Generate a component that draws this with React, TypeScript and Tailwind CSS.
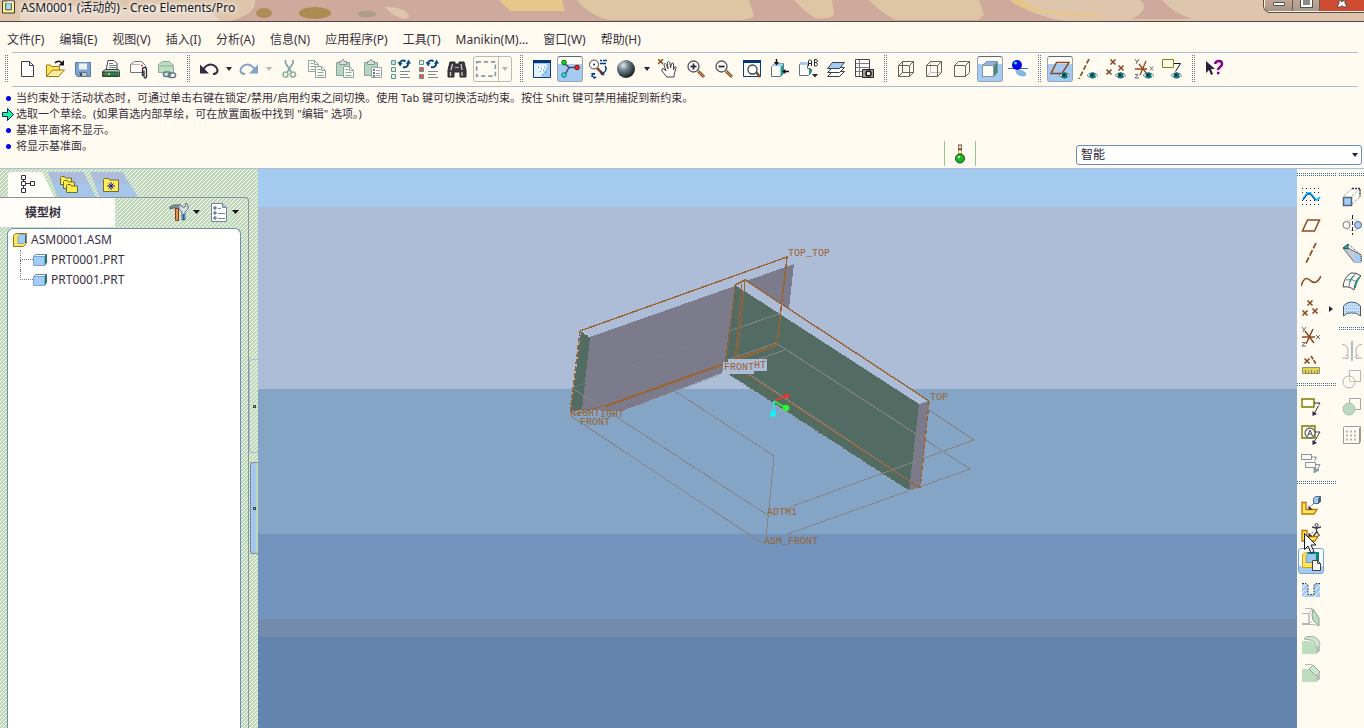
import React from "react";

type IconProps = { children: React.ReactNode; size?: number };

function Icon({ children, size = 20 }: IconProps) {
  return (
    <svg
      width={size}
      height={size}
      viewBox="0 0 20 20"
      fill="none"
      stroke="#39404a"
      strokeWidth="1"
      aria-hidden="true"
      className="block shrink-0"
    >
      {children}
    </svg>
  );
}

const BROWN = "#8c4a21";
const GOLD = "#ffe75a";

function Eye() {
  return (
    <g>
      <path d="M9 16.500Q14.500 11 20 16.500Q14.500 21 9 16.500Z" fill="#fffbf0" stroke="#39525a" strokeDasharray="2 1" />
      <circle cx="14.500" cy="16.500" r="3" fill="#007b84" stroke="none" />
      <circle cx="14" cy="16" r="1.200" fill="#101820" stroke="none" />
    </g>
  );
}

function Crosses({ points }: { points: [number, number][] }) {
  return (
    <g stroke={BROWN} strokeWidth="1.600">
      {points.map(([x, y]) => (
        <path key={`${x}-${y}`} d={`M${x - 2.5} ${y - 2.5}l5 5M${x + 2.5} ${y - 2.5}l-5 5`} />
      ))}
    </g>
  );
}

function Sheet({ x, y, tone = "#8ca5a5" }: { x: number; y: number; tone?: string }) {
  return (
    <g stroke={tone}>
      <path d={`M${x} ${y}h6l4 4v7h-10z`} fill="#fffbf0" />
      <path d={`M${x + 6} ${y}v4h4M${x + 2} ${y + 3}h3M${x + 2} ${y + 6}h6M${x + 2} ${y + 9}h6`} />
    </g>
  );
}

function Clipboard() {
  return (
    <>
      <path d="M1.500 3.500h13v13h-13z" fill="#b5d6bd" stroke="#84a59c" />
      <path d="M4.500 5.500v-3h2l1-2h1l1 2h2v3z" fill="#dedede" stroke="#84949c" />
    </>
  );
}

function Lens({ sign }: { sign?: "plus" | "minus" }) {
  return (
    <>
      <path d="M12 12l6 6" stroke="#844a21" strokeWidth="3" />
      <path d="M12 12l6 6" stroke="#d6a573" strokeWidth="1" />
      <circle cx="7.500" cy="7.500" r="5.500" fill="#fffdf8" stroke="#52525a" strokeWidth="1.300" />
      {sign && <path d="M4.500 7.500h6" stroke="#29293a" strokeWidth="1.800" />}
      {sign === "plus" && <path d="M7.500 4.500v6" stroke="#29293a" strokeWidth="1.800" />}
    </>
  );
}

function Regenerate({ first, rest }: { first: string; rest: string }) {
  return (
    <>
      <path d="M.5 1.500h4v4h-4z" fill={first} stroke="#63948c" />
      <path d="M.5 8.500h4v4h-4z M.5 15.500h4v4h-4z" fill={rest} stroke="#63948c" />
      <path d="M8.500 4.500c1-3 4-4 6-2M12 8c3 1 5.500-1 5-4" stroke="#004a84" strokeWidth="2" />
      <path d="M6.500 3l5 1-2.500 3.500z M20 4.500l-5 .500 2.500-4.500z" fill="#004a84" stroke="none" />
      <path d="M9 12.500h10M9 15.500h8M9 18.500h10" stroke="#7b8c94" />
    </>
  );
}

const icons = {
  newFile: (
    <Icon>
      <path d="M4.500 2.500h8l4 4v11h-12z" fill="#fff" />
      <path d="M12.500 2.500v4h4" />
    </Icon>
  ),
  open: (
    <Icon>
      <path d="M1.500 17v-11h4l1 1.500h8v9.500z" fill={GOLD} stroke="#a57318" />
      <path d="M1.500 17.500l6-6.500h12l-6 6.500z" fill="#ffef9c" stroke="#a57318" />
      <path d="M10 4c2-2.500 5-2.500 7 0" stroke="#18181f" strokeWidth="1.500" />
      <path d="M19 1v5.500h-5.500z" fill="#18181f" stroke="none" />
    </Icon>
  ),
  save: (
    <Icon>
      <path d="M2.500 3.500h15v14h-13l-2-2z" fill="#7ba5d6" stroke="#5a7ba5" />
      <path d="M5.500 4h9v7h-9z" fill="#eff3f7" stroke="#84a5ce" />
      <path d="M6 13.500h8v4h-8z" fill="#c6c6c6" stroke="#637b94" />
      <path d="M8 14v3" stroke="#424a63" strokeWidth="2" />
    </Icon>
  ),
  print: (
    <Icon>
      <path d="M7 1.500h6l3 3v7H5z" fill="#fff" />
      <path d="M8 4.500h4M8 6.500h7M8 8.500h7" stroke="#737b84" />
      <path d="M1.500 12.500l3-2h13l1 2v5h-17z" fill="#b5c6bd" stroke="#31423a" />
      <path d="M2 13h15v4h-15z" fill="#397b52" stroke="#21523a" />
      <path d="M4 15h2" stroke="#f33" strokeWidth="2" />
      <path d="M7 15h2" stroke="#5cff4a" strokeWidth="2" />
    </Icon>
  ),
  mail: (
    <Icon>
      <path d="M1.500 5.500l4-3h7l4 4v7h-15z" fill="#fffdf7" stroke="#737373" />
      <path d="M2 5.500h9" stroke="#b5b5b5" />
      <circle cx="13" cy="6.500" r="1" fill="#ef2929" stroke="none" />
      <path d="M13.500 17v-7c0-2 4-2 4 0v7.500c0 2-2.500 2-2.500 0v-6" fill="#fffdf7" stroke="#29293a" strokeWidth="1.300" />
    </Icon>
  ),
  link: (
    <Icon>
      <path d="M1.500 5.500l4-3h7l4 4v7h-15z" fill="#bddebd" stroke="#84ad9c" />
      <path d="M3 7h13" stroke="#84ad9c" />
      <rect x="6.500" y="13" width="7" height="4.500" rx="2" fill="#cee7ce" stroke="#637b8c" strokeWidth="1.500" />
      <rect x="11.500" y="14" width="7" height="4.500" rx="2" stroke="#637b8c" strokeWidth="1.500" />
    </Icon>
  ),
  undo: (
    <Icon>
      <path d="M4 11c3-6 9-7 13-3c3 4 1 7-3 7" stroke="#392942" strokeWidth="2" />
      <path d="M1 5.500v9h9z" fill="#392942" stroke="none" />
    </Icon>
  ),
  redo: (
    <Icon>
      <path d="M16 11c-3-6-9-7-13-3c-3 4-1 7 3 7" stroke="#84a5bd" strokeWidth="2" />
      <path d="M19 5.500v9h-9z" fill="#84a5bd" stroke="none" />
    </Icon>
  ),
  cut: (
    <Icon>
      <path d="M6.500 1v3l6 9.500M14 1v3l-6 9.500" stroke="#84a5ad" strokeWidth="1.700" />
      <circle cx="6.500" cy="15.500" r="2.500" stroke="#8cb59c" strokeWidth="1.700" />
      <circle cx="14" cy="15.500" r="2.500" stroke="#8cb59c" strokeWidth="1.700" />
    </Icon>
  ),
  copy: (
    <Icon>
      <Sheet x={1.5} y={1.5} />
      <Sheet x={8.5} y={7.5} />
    </Icon>
  ),
  paste: (
    <Icon>
      <Clipboard />
      <Sheet x={8.5} y={7.5} />
    </Icon>
  ),
  pasteSpecial: (
    <Icon>
      <Clipboard />
      <path d="M8.500 8.500h10v10h-10z" fill="#fffbf0" stroke="#94a5ad" />
      <path d="M10 11h2M10 14h2M10 17h2" stroke="#637b8c" strokeWidth="2" />
      <path d="M13 11.500h4M13 14.500h4M13 16.500h4" stroke="#94a5ad" />
    </Icon>
  ),
  regen: (
    <Icon>
      <Regenerate first="#bde7d6" rest="#d6f7ef" />
    </Icon>
  ),
  regenManager: (
    <Icon>
      <Regenerate first="#e7e7e7" rest="#f7524a" />
    </Icon>
  ),
  find: (
    <Icon>
      <path d="M3 3h5v2h4V3h5l2 8v7h-6v-5H7v5H1v-7z" fill="#39393a" stroke="#29292f" />
      <path d="M5.500 5l-1.500 6M14 5l1 6M3.500 13v4M15 13v4" stroke="#cecece" strokeWidth="1.300" />
      <path d="M8 8.500h4" stroke="#b5b5b5" />
    </Icon>
  ),
  selectBox: (
    <Icon size={22}>
      <path d="M1.500 3.500h17v13h-17z" stroke="#849ca5" strokeWidth="1.500" strokeDasharray="4 2.500" />
    </Icon>
  ),
  repaint: (
    <Icon>
      <path d="M1.500 1.500h17v17h-17z" fill="#a5c6f0" stroke="#004284" />
      <path d="M2 5h13l-6 13H2z" fill="#e7efff" stroke="none" />
      <path d="M1 2.500h18" stroke="#003973" strokeWidth="3" />
      <path d="M4 8l6 9 5-10z" fill="#fff" stroke="none" />
      <path d="M6 8.500h1M9 9.500h1M12 8.500h1M8 12.500h1M11 11.500h1M13 13.500h1M10 15.500h1" stroke="#18b5ce" strokeWidth="1.500" />
    </Icon>
  ),
  spinCenter: (
    <Icon>
      <path d="M4 4l5 4.500h8M9 8.500l-4 7" stroke="#424a63" strokeWidth="1.500" />
      <circle cx="4" cy="3.500" r="2.300" fill="#18d618" stroke="#106b10" />
      <circle cx="17" cy="8.500" r="2.300" fill="#f72121" stroke="#7b1010" />
      <circle cx="4" cy="16" r="2.300" fill="#31dede" stroke="#107b7b" />
    </Icon>
  ),
  orientMode: (
    <Icon>
      <path d="M9 9l7 7" stroke="#844a21" strokeWidth="2.500" />
      <circle cx="6" cy="5.500" r="4.500" fill="#fff" stroke="#424242" />
      <circle cx="6" cy="5.500" r="1" fill="#292929" stroke="none" />
      <path d="M12 1.500h2M15 1.500h4M12 4.500h6M17 7c2 2 1 6-2 7M4 18c0-3 1-4 3-3" stroke="#003994" strokeWidth="1.500" />
      <path d="M2 14h5v2zM12 12l4 3-3 1z M4 17l5 1-3 2z" fill="#003994" stroke="none" />
    </Icon>
  ),
  sphere: (
    <Icon>
      <defs>
        <radialGradient id="ball" cx="35%" cy="30%" r="70%">
          <stop offset="0" stopColor="#dee7ef" />
          <stop offset="0.450" stopColor="#6b7b84" />
          <stop offset="1" stopColor="#182129" />
        </radialGradient>
      </defs>
      <circle cx="10" cy="10" r="9" fill="url(#ball)" stroke="none" />
    </Icon>
  ),
  pan: (
    <Icon>
      <path d="M0 0l5 5M5 0l-5 5" stroke={BROWN} strokeWidth="1.500" />
      <path d="M8 17l-4-5c-1-2 1-3 2-2l2 2-2-6c0-2 2-2 2.500 0l1.500 4-.5-6c0-2 2-2 2.500 0l.500 5 1-4c.500-1.500 2-1.500 2 0v6l1-3c1-1 2 0 1.500 1l-2 7v2H9z" fill="#fff" stroke="#4a4242" />
    </Icon>
  ),
  zoomIn: (
    <Icon>
      <Lens sign="plus" />
    </Icon>
  ),
  zoomOut: (
    <Icon>
      <Lens sign="minus" />
    </Icon>
  ),
  refit: (
    <Icon>
      <path d="M1.500 1.500h17v16h-17z" fill="#fffdf7" stroke="#004284" />
      <path d="M1 2.500h18" stroke="#003973" strokeWidth="3" />
      <path d="M14 13l4 5" stroke="#844a21" strokeWidth="2.500" />
      <circle cx="10.500" cy="10.500" r="4.500" fill="#fff" stroke="#42424a" strokeWidth="1.300" />
    </Icon>
  ),
  reorient: (
    <Icon>
      <path d="M1.500 7.500l3-3h9v10l-3 3h-9z" fill="#fffdf7" stroke="#63737b" />
      <path d="M2 7l2.500-2.500h9l-3 3z" fill="#a5cbf7" stroke="none" />
      <path d="M10.500 8l3-3v9.500l-3 3z" fill="#299c94" stroke="none" />
      <path d="M6.500 0v4M19 12.500h-4" stroke="#101018" strokeWidth="1.500" />
      <path d="M4 3h5l-2.500 3.500zM15.500 10v5l-3.500-2.500z" fill="#101018" stroke="none" />
    </Icon>
  ),
  savedViews: (
    <Icon>
      <path d="M1.500 5.500l2-2h6v6h3v5l-2 2h-9z" fill="#fffdf7" stroke="#63737b" />
      <path d="M2 5l2-2h6v3h-8z" fill="#a5cbf7" stroke="none" />
      <path d="M11 10h3v3l-3 3z" fill="#318c8c" stroke="none" />
      <path d="M10.500 7v-5l1.500-1.500 1.500 1.500v5M10.500 4.500h3M16.500 .500v6.500h2l1-1.500-1-2h-2M18.500 3.500l1-1.500-1-1.500h-2" stroke="#292931" />
      <path d="M14 15h6l-3 3.500z" fill="#292931" stroke="none" />
    </Icon>
  ),
  layers: (
    <Icon>
      <path d="M1.500 17.500l5-5h12l-5 5z" fill="#fff" />
      <path d="M1.500 13.500l5-5h12l-5 5z" fill="#fff" />
      <path d="M1.500 9.500l5-6h12l-5 6z" fill="#a5cbf7" />
    </Icon>
  ),
  viewManager: (
    <Icon>
      <path d="M1.500 .500h14v17h-14z" fill="#fff" stroke="#42424a" />
      <path d="M5.500 1v16M2 4.500h13M2 8.500h13M2 12.500h13" stroke="#7b7b84" />
      <path d="M8.500 10.500h11v8h-11z" fill="#a59c8c" stroke="#292931" />
      <circle cx="14.500" cy="14.500" r="2.500" fill="#fff" stroke="#18181f" strokeWidth="1.500" />
    </Icon>
  ),
  wireframe: (
    <Icon>
      <path d="M2.500 6.500h11v11h-11zM6.500 2.500h11v11h-11zM2.500 6.500l4-4M13.500 6.500l4-4M2.500 17.500l4-4M13.500 17.500l4-4" stroke="#6b6352" />
    </Icon>
  ),
  hiddenLine: (
    <Icon>
      <path d="M6.500 3v10.500h11M2.500 17.500l4-4" stroke="#bdbdce" />
      <path d="M2.500 6.500h11v11h-11zM2.500 6.500l4-4h11l-4 4M17.500 2.500v11l-4 4" stroke="#6b6352" />
    </Icon>
  ),
  noHidden: (
    <Icon>
      <path d="M2.500 6.500h11v11h-11zM2.500 6.500l4-4h11l-4 4M17.500 2.500v11l-4 4" stroke="#6b6352" />
    </Icon>
  ),
  shaded: (
    <Icon>
      <path d="M2.500 6.500l4-4h11l-3 4z" fill="#8cb5e7" stroke="#84949c" />
      <path d="M14 6.500l3.500-4v11l-3.500 4z" fill="#42847b" stroke="#84949c" />
      <path d="M2.500 6.500h11v11h-11z" fill="#fffdf7" stroke="#84949c" />
    </Icon>
  ),
  realism: (
    <Icon>
      <path d="M0 1h20v18H0z" fill="#fff" stroke="none" />
      <path d="M0 9.500h20" stroke="#5a6b84" />
      <ellipse cx="13" cy="14" rx="5.500" ry="3" fill="#84b5e7" stroke="none" transform="rotate(20 13 14)" />
      <circle cx="9" cy="6" r="5" fill="#0008e7" stroke="none" />
      <circle cx="7.500" cy="4" r="1.500" fill="#31e7f7" stroke="none" />
    </Icon>
  ),
  planeDisplay: (
    <Icon>
      <path d="M1 14.500h11l7-11H6.500z" stroke={BROWN} strokeWidth="1.500" />
      <Eye />
    </Icon>
  ),
  axisDisplay: (
    <Icon>
      <path d="M11 0L1 20" stroke={BROWN} strokeWidth="1.700" strokeDasharray="5 2" />
      <Eye />
    </Icon>
  ),
  pointDisplay: (
    <Icon>
      <Crosses points={[[7, 3], [3, 13], [15, 9]]} />
      <Eye />
    </Icon>
  ),
  csysDisplay: (
    <Icon>
      <path d="M1 10h12M5 5l8 10M12 2L6 16" stroke={BROWN} strokeWidth="1.300" />
      <path d="M1 0l2 3M5 0l-3 5M1 15.500h3l-3 3.500h4M16 7.500l3 4M19 7.500l-3 4" stroke="#6b6b6b" />
      <Eye />
    </Icon>
  ),
  annotationDisplay: (
    <Icon>
      <path d="M.5 .500h11v8h-11z" stroke="#84840a" />
      <path d="M12 4.500h6.500l-5 8" stroke="#18181f" />
      <Eye />
    </Icon>
  ),
  contextHelp: (
    <Icon>
      <path d="M2 2v12l3-3 2 5 2-1-2-5h4z" fill="#29213a" stroke="none" />
      <path d="M11 5c1-4 7-4 7 0c0 3-4 3-4 6" stroke="#84008c" strokeWidth="2.500" />
      <path d="M13 14h2.500" stroke="#84008c" strokeWidth="2.500" />
    </Icon>
  ),
  sketch: (
    <Icon>
      <g stroke="#002984" strokeDasharray="1 3">
        <path d="M1 1.500h18M1 5.500h18M1 13.500h18M1 17.500h18" />
      </g>
      <path d="M2 12l3-4q3-4 6 0l3 4q2 2 5-2" stroke="#08bdef" strokeWidth="2" />
      <path d="M2 13l3-4q3-4 6 0l3 4" stroke="#0018b5" />
    </Icon>
  ),
  plane: (
    <Icon>
      <path d="M1.500 16h12l5-11h-12z" stroke={BROWN} strokeWidth="1.500" />
    </Icon>
  ),
  axis: (
    <Icon>
      <path d="M15 0L5 20" stroke={BROWN} strokeWidth="1.700" strokeDasharray="6 2" />
    </Icon>
  ),
  curve: (
    <Icon>
      <path d="M0 15c3-9 6-9 10-5c4 3 7 1 10-5" stroke={BROWN} strokeWidth="1.600" />
    </Icon>
  ),
  points: (
    <Icon>
      <Crosses points={[[9, 4], [4, 14], [14, 12]]} />
    </Icon>
  ),
  csys: (
    <Icon>
      <path d="M1 10h13M4 4l9 12M12 2L5 17" stroke={BROWN} strokeWidth="1.500" />
      <path d="M1 0l2 3M5 0l-3 5M1 15.500h3l-3 3.500h4M15 8l4 4M19 8l-4 4" stroke="#6b6b6b" />
    </Icon>
  ),
  analysis: (
    <Icon>
      <Crosses points={[[6, 6]]} />
      <path d="M10 1l5 8" stroke={BROWN} strokeWidth="1.700" strokeDasharray="4 1" />
      <path d="M1.500 12.500h17v6h-17z" fill="#ded652" stroke="#949473" />
      <path d="M4.500 15v3M7.500 16v2M10.500 15v3M13.500 16v2M16.500 15v3" stroke="#94844a" />
    </Icon>
  ),
  annotation: (
    <Icon>
      <path d="M1 2h12v8H1z" stroke="#7b7b00" strokeWidth="1.400" />
      <path d="M13 6h6l-6 11" stroke="#29293a" strokeDasharray="8 1" />
      <path d="M11.500 14v5l4.500-2z" fill="#29293a" stroke="none" />
    </Icon>
  ),
  annotationFeature: (
    <Icon>
      <path d="M1 1h13v12H1z" stroke="#7b7b00" strokeWidth="1.400" />
      <circle cx="9" cy="8" r="5" fill="#f7f3ef" stroke="#63736b" strokeWidth="1.300" />
      <path d="M6.500 11l2.500-6 2.500 6M7 9h4" stroke="#52525a" />
      <path d="M14 7h5l-6 10" />
      <path d="M11.500 15v5l4.500-2z" fill="#29293a" stroke="none" />
    </Icon>
  ),
  annotationGroup: (
    <Icon>
      <path d="M.5 1.500h10v5h-10zM4.500 9.500h10v5h-10zM11 4h4.500l-2 4M15 11.500h4l-3 6" stroke="#8494a5" />
      <path d="M13 15v5l5-3z" fill="#7bb59c" stroke="#8494a5" />
    </Icon>
  ),
  assemble: (
    <Icon>
      <path d="M1 7.500h4v7h11l-3 4.500H1z" fill={GOLD} stroke="#bd7308" strokeWidth="1.300" />
      <path d="M12.500 3.500l2-2h5v5l-2 2h-5z" fill="#a5cbf7" stroke="#526b84" />
      <path d="M17.500 3.500l2-2v5l-2 2z" fill="#39636b" stroke="#526b84" />
      <path d="M12 9l-4 4" strokeDasharray="1 1" />
      <path d="M7.500 10.500v4h4z" fill="#29293a" stroke="none" />
    </Icon>
  ),
  manikin: (
    <Icon>
      <path d="M1 7.500h5v6h11l-3 4.500H1z" fill={GOLD} stroke="#bd7308" strokeWidth="1.300" />
      <circle cx="15.500" cy="2" r="1.500" />
      <path d="M11 4l4 1h1l4-1M15.500 4v5l-3 4M15.500 8l3 5" strokeWidth="1.300" />
      <path d="M12 9l-4 3" strokeDasharray="1 1" />
      <path d="M7.500 9.500v4h4z" fill="#29293a" stroke="none" />
    </Icon>
  ),
  createPart: (
    <Icon>
      <path d="M1.500 3.500l3-2h13v3l-4 12h-12z" fill={GOLD} stroke="#d6a510" />
      <path d="M5 4.500l2-2h9v9h-11z" fill="#9cc6ef" stroke="#7b9cbd" />
      <path d="M15 4l3-2v8h-3zM7 1h11v2H6z" fill="#00847b" stroke="none" />
      <path d="M11.500 9.500h5l3 3v7h-8z" fill="#fffbf0" stroke="#42424a" />
      <path d="M16.500 9.500v3h3" stroke="#42424a" />
    </Icon>
  ),
  hole: (
    <Icon>
      <path d="M1 5h6v11h6V5h6v13H1z" fill="#a5cbf7" stroke="none" />
      <path d="M1 9l4-4M1 14l6-6M2 18l5-5M13 12l6-6M13 18l6-6" stroke="#fff" />
      <path d="M1 4.500h4l2 2v9h6v-9l2-2h4" stroke="#29424a" strokeDasharray="2 1" />
    </Icon>
  ),
  shell: (
    <Icon>
      <path d="M1 6.500h7v10H1M4 1.500h7l-3 5v10l3-2" stroke="#b5b5b5" />
      <path d="M12 2l6 9v8l-6-6q-2-5 0-11z" fill="#bddebd" stroke="#84a594" />
      <path d="M1 17.500h10l7 1" stroke="#b5b5b5" />
    </Icon>
  ),
  round: (
    <Icon>
      <path d="M1 6h8q6 2 6 13H1z" fill="#bddebd" stroke="none" />
      <path d="M3 4l3-2.500h5q7 1 8 8l-4 4q-1-9-8-9z" fill="#cee7ce" stroke="#a5ada5" />
      <path d="M15 14l4-4v6l-4 3z" fill="#b5bdbd" stroke="none" />
    </Icon>
  ),
  chamfer: (
    <Icon>
      <path d="M1 6h7l7 8v5H1z" fill="#bddebd" stroke="none" />
      <path d="M4 1.500h7" stroke="#b5bdb5" />
      <path d="M12 2l7 7-4 4-7-7z" fill="#cee7ce" stroke="#94a594" />
      <path d="M15 14l4-4v6l-4 3z" fill="#b5bdbd" stroke="none" />
    </Icon>
  ),
  extrude: (
    <Icon>
      <path d="M1.500 9l8-7.500h8v8l-8 8z" fill="#fffdf8" stroke="none" />
      <path d="M2 9l8-7.500M10 9l8-7.500M10 17l8-7" stroke="#737b84" strokeDasharray="1 1" />
      <path d="M10 1.500h8v8" stroke="#29314a" strokeWidth="1.500" strokeDasharray="2 1" />
      <path d="M1.500 10.500h8v8h-8z" fill="#a5cbf7" stroke="#52637b" strokeWidth="1.500" />
    </Icon>
  ),
  revolve: (
    <Icon>
      <circle cx="4.500" cy="10" r="3.500" fill="#fffdf7" stroke="#737b7b" />
      <circle cx="16" cy="10" r="3.500" fill="#a5cbf7" stroke="#526b84" />
      <path d="M5 6q6-3 11 0M5 14q6 3 11 0" stroke="#9c9c9c" strokeDasharray="1 1" />
      <path d="M10.500 0v20" stroke="#212139" strokeDasharray="4 2" />
    </Icon>
  ),
  sweep: (
    <Icon>
      <path d="M6 1l13 11v7h-7L1 5z" fill="#fffdf8" stroke="none" />
      <path d="M1 5h5l13 7v7h-7z" fill="#c6cbd6" stroke="#636b73" />
      <path d="M12 12h7v7h-7z" fill="#a5cbf7" stroke="none" />
      <path d="M6 1l13 11v7" stroke="#39404a" strokeDasharray="1 1" />
      <path d="M1 5l5-4v5z" fill="#39a594" stroke="#185a5a" />
    </Icon>
  ),
  boundary: (
    <Icon>
      <path d="M1 16q1-10 8-14q5-1 10 3q-6 3-7 14q-4-4-11-3z" fill="#fffdf7" stroke="#424a52" />
      <path d="M4 9q6-2 11 2M7 16q0-9 7-13" stroke="#737b84" />
      <path d="M12 5q-3 2-4 6M18 6q-3 3-5 11" stroke="#299c8c" strokeWidth="1.500" />
    </Icon>
  ),
  style: (
    <Icon>
      <path d="M1.500 17v-10q3-4 8-4q6 0 9 4v10q-4-4-9-3q-5-1-8 3z" fill="#c6def7" stroke="#425a73" />
      <path d="M4 6.500h13M4 9.500h13M4 12.500h13" stroke="#84b5ef" strokeDasharray="1 1" />
    </Icon>
  ),
  mirror: (
    <Icon>
      <path d="M10 0v20" stroke="#849ca5" strokeWidth="1.300" />
      <path d="M0 3.500q6 0 6 6q0 7-6 8M20 3.500q-6 0-6 6q0 7 6 8M3 17.500h3v-4M17 17.500h-3v-4" stroke="#adadb5" />
    </Icon>
  ),
  merge: (
    <Icon>
      <path d="M7.500 1.500h11v11h-11z" stroke="#b5b5bd" />
      <circle cx="7" cy="13" r="6" stroke="#adb5ad" />
      <path d="M7.500 7v5.500h5.500" stroke="#b5deb5" />
    </Icon>
  ),
  trim: (
    <Icon>
      <path d="M7.500 1.500h11v11h-11z" stroke="#a5a5ad" />
      <circle cx="7" cy="12" r="6" fill="#bdd9bd" stroke="#a5c6a5" />
    </Icon>
  ),
  pattern: (
    <Icon>
      <path d="M1.500 2.500l1-1h16v15l-1 2h-16z" stroke="#949c9c" />
      <path d="M17.500 3v15" stroke="#849c94" />
      <path d="M4 6.500h12M4 10.500h12M4 14.500h12" stroke="#b5b5b5" strokeWidth="2" strokeDasharray="2 2" />
    </Icon>
  ),
};

type Tool = keyof typeof icons;
type Pressed = "on" | "hover";

const pressedStyles: Record<Pressed, string> = {
  on: "flex h-[26px] w-[26px] items-center justify-center rounded-[3px] border border-[#94a5bd] border-t-[#5a6b73] bg-linear-to-b from-[#fffdf8] from-30% to-[#a5cbf0] to-30%",
  hover:
    "flex h-[26px] w-[26px] items-center justify-center rounded-[3px] border border-[#7ba5d6] bg-linear-to-b from-[#fffdf8] from-70% to-[#a5cbf0] to-70%",
};

function ToolButton({ tool, label, pressed }: { tool: Tool; label: string; pressed?: Pressed }) {
  return (
    <button
      type="button"
      aria-label={label}
      aria-pressed={pressed ? true : undefined}
      className="flex h-7 w-7 shrink-0 items-center justify-center"
    >
      {pressed ? <span className={pressedStyles[pressed]}>{icons[tool]}</span> : icons[tool]}
    </button>
  );
}

function DropArrow({ label, tone }: { label: string; tone: string }) {
  return (
    <button type="button" aria-label={label} className="flex h-7 w-3 shrink-0 items-center justify-center">
      <svg width="6" height="4" viewBox="0 0 6 4" aria-hidden="true">
        <path d="M0 0h6L3 4z" fill={tone} />
      </svg>
    </button>
  );
}

function Grip() {
  return (
    <span className="flex w-3.5 shrink-0 justify-center gap-px">
      <span className="h-7 w-px bg-[repeating-linear-gradient(180deg,#637b84_0_1px,transparent_1px_2px)]" />
      <span className="h-7 w-px bg-[repeating-linear-gradient(180deg,#637b84_0_1px,transparent_1px_2px)]" />
    </span>
  );
}

function RowGrip() {
  return (
    <span className="flex h-3.5 w-full shrink-0 flex-col gap-px pt-1">
      <span className="h-px w-full bg-[repeating-linear-gradient(90deg,#42738c_0_1px,transparent_1px_2px)]" />
      <span className="h-px w-full bg-[repeating-linear-gradient(90deg,#42738c_0_1px,transparent_1px_2px)]" />
    </span>
  );
}

const menus = [
  "文件(F)", "编辑(E)", "视图(V)", "插入(I)", "分析(A)", "信息(N)",
  "应用程序(P)", "工具(T)", "Manikin(M)...", "窗口(W)", "帮助(H)",
];

const messages: { kind: "info" | "prompt"; text: string }[] = [
  { kind: "info", text: "当约束处于活动状态时，可通过单击右键在锁定/禁用/启用约束之间切换。使用 Tab 键可切换活动约束。按住 Shift 键可禁用捕捉到新约束。" },
  { kind: "prompt", text: '选取一个草绘。(如果首选内部草绘，可在放置面板中找到 "编辑" 选项。)' },
  { kind: "info", text: "基准平面将不显示。" },
  { kind: "info", text: "将显示基准面。" },
];

function TitleBar() {
  return (
    <header className="relative flex h-[22px] shrink-0 items-start justify-between border-b border-[#5a4242] bg-[#ceaa9c]">
      <svg className="absolute inset-0 h-full w-full" viewBox="0 0 1364 21" preserveAspectRatio="none" aria-hidden="true">
        <path d="M0 0h255q2 14-25 21H0z" fill="#dec6ad" />
        <path d="M20 14q30-12 70-6t60-4l60 6 10 11H20z" fill="#e7d6c6" />
        <path d="M385 7q22 0 24 10l-5 2q-12-3-19-12z" fill="#dec6ad" />
        <ellipse cx="264" cy="13" rx="8" ry="5" fill="#ad8c5a" />
        <ellipse cx="315" cy="13" rx="16" ry="6" fill="#ad8c52" />
        <ellipse cx="367" cy="14" rx="9" ry="3.500" fill="#ad9c8c" />
        <path d="M499 0h63l3 11h-55z" fill="#e7c68c" />
        <path d="M577 0h172l5 16q-3 3-14 4H609q-22-6-32-20z" fill="#dec6a5" />
        <path d="M794 0h38l2 15q-5 5-19 3q-10-6-21-18z" fill="#dec6a5" />
        <path d="M869 0h110l5 15-6 5h-82q-15-7-27-20z" fill="#dec6a5" />
        <path d="M1012 0h352v21h-300q-36-7-52-21z" fill="#dec6ad" />
        <path d="M1010 0h14q10 14 76 14l-5 3q-70-1-85-17z" fill="#e7c68c" />
        <path d="M1140 0h22q10 12 30 19h-60q12-7 12-12t-4-7z" fill="#ceaa9c" />
      </svg>
      <div className="relative flex items-start gap-1.5 pl-0.5">
        <svg width="13" height="14" viewBox="0 0 14 14" aria-hidden="true">
          <path d="M.5 .500h13v13H.5z" fill="#ffef8c" stroke="#29292f" />
          <path d="M4 3h6v7H4z" fill="#a5deef" stroke="#3a4a52" />
          <path d="M4 3l2-2h7l-3 2z" fill="#fff" />
        </svg>
        <h1 className="text-[12px] leading-4 whitespace-nowrap text-[#18181f] [text-shadow:0_0_4px_#fff,0_0_6px_#fff]">
          ASM0001 (活动的) - Creo Elements/Pro
        </h1>
      </div>
      <div className="relative flex h-3 rounded-bl-md border border-t-0 border-r-0 border-[#fff3e7] outline outline-[#5a4a4a]">
        <button type="button" aria-label="最小化" className="flex w-7 justify-center border-r border-[#6b5a52] bg-linear-to-b from-[#c6a594] to-[#a59484] pt-0.5">
          <span className="h-1 w-3 rounded-[1px] border border-[#4a5252] bg-white" />
        </button>
        <button type="button" aria-label="最大化" className="flex w-[27px] justify-center border-r border-[#6b5a52] bg-linear-to-b from-[#c6a594] to-[#a59c8c]">
          <span className="h-[7px] w-[11px] border-2 border-t-0 border-white bg-[#8c8c84] outline outline-[#4a5252]" />
        </button>
        <button type="button" aria-label="关闭" className="flex w-11 justify-center bg-[#ce4a31]">
          <svg width="12" height="8" viewBox="0 0 12 8" aria-hidden="true">
            <path d="M4 0l2 2 2-2h1v3l2 4H7.500L6 5.500 4.500 7H1l2-4V0z" fill="#fff" stroke="#5a4a4a" />
          </svg>
        </button>
      </div>
    </header>
  );
}

function MainToolbar() {
  return (
    <div className="shrink-0 overflow-hidden pr-1.5 pl-3">
      <div className="flex h-[35px] items-start border-y border-[#adbdd6] pt-0.5">
        <div className="-ml-[13px] flex items-center">
          <Grip />
          <ToolButton tool="newFile" label="新建" />
          <ToolButton tool="open" label="打开" />
          <ToolButton tool="save" label="保存" />
          <ToolButton tool="print" label="打印" />
          <ToolButton tool="mail" label="发送邮件" />
          <ToolButton tool="link" label="发送链接" />
          <Grip />
          <ToolButton tool="undo" label="撤消" />
          <DropArrow label="撤消列表" tone="#292139" />
          <ToolButton tool="redo" label="重做" />
          <DropArrow label="重做列表" tone="#b5b5b5" />
          <ToolButton tool="cut" label="剪切" />
          <ToolButton tool="copy" label="复制" />
          <ToolButton tool="paste" label="粘贴" />
          <ToolButton tool="pasteSpecial" label="选择性粘贴" />
          <ToolButton tool="regen" label="再生" />
          <ToolButton tool="regenManager" label="再生管理器" />
          <ToolButton tool="find" label="查找" />
          <div className="mx-0.5 flex h-[26px] w-[39px] shrink-0 items-center rounded-[3px] border border-[#b5bdb5]">
            <button type="button" aria-label="选取框" className="flex w-6 justify-center">
              {icons.selectBox}
            </button>
            <span className="h-full border-l border-[#b5bdb5]" />
            <DropArrow label="选取方式" tone="#b5b5b5" />
          </div>
          <Grip />
          <ToolButton tool="repaint" label="重画" />
          <ToolButton tool="spinCenter" label="旋转中心" pressed="on" />
          <ToolButton tool="orientMode" label="定向模式" />
          <ToolButton tool="sphere" label="外观库" />
          <span className="flex w-3.5 shrink-0 justify-center">
            <DropArrow label="外观列表" tone="#292139" />
          </span>
          <ToolButton tool="pan" label="平移" />
          <ToolButton tool="zoomIn" label="放大" />
          <ToolButton tool="zoomOut" label="缩小" />
          <ToolButton tool="refit" label="重新调整" />
          <ToolButton tool="reorient" label="重定向" />
          <ToolButton tool="savedViews" label="已命名视图" />
          <ToolButton tool="layers" label="层" />
          <ToolButton tool="viewManager" label="视图管理器" />
          <Grip />
          <ToolButton tool="wireframe" label="线框" />
          <ToolButton tool="hiddenLine" label="隐藏线" />
          <ToolButton tool="noHidden" label="无隐藏线" />
          <ToolButton tool="shaded" label="着色" pressed="on" />
          <ToolButton tool="realism" label="增强的真实感" />
          <Grip />
          <ToolButton tool="planeDisplay" label="平面显示" pressed="on" />
          <ToolButton tool="axisDisplay" label="轴显示" />
          <ToolButton tool="pointDisplay" label="点显示" />
          <ToolButton tool="csysDisplay" label="坐标系显示" />
          <ToolButton tool="annotationDisplay" label="注释元素显示" />
          <Grip />
          <ToolButton tool="contextHelp" label="上下文帮助" />
        </div>
      </div>
    </div>
  );
}

function MessageArea() {
  return (
    <section className="flex h-[82px] shrink-0 items-start justify-between border-b border-[#adbdd6] pt-[3px]">
      <ul className="text-[11px] leading-4 text-[#39313f]">
        {messages.map((m) => (
          <li key={m.text} className="flex items-center whitespace-nowrap">
            <span className="flex w-4 justify-center">
              {m.kind === "info" ? (
                <span className="h-[5px] w-[5px] rounded-full bg-[#0000f7]" />
              ) : (
                <svg width="12" height="13" viewBox="0 0 12 13" aria-hidden="true">
                  <path d="M.5 4.500h5v-4l6 6-6 6v-4h-5z" fill="#18f794" stroke="#00216b" />
                </svg>
              )}
            </span>
            {m.text}
          </li>
        ))}
      </ul>
      <div className="flex items-end gap-[100px] self-end pr-0.5 pb-0.5">
        <span className="flex h-[25px] w-8 items-center justify-center border-x border-[#94c694]">
          <svg width="12" height="20" viewBox="0 0 12 20" aria-label="再生状态">
            <path d="M4 .500h4v10H4z" fill="#5a524a" />
            <circle cx="6" cy="3" r="1.700" fill="#f7c6b5" />
            <circle cx="6" cy="8" r="2" fill="#ffe78c" />
            <circle cx="6" cy="14.500" r="4.500" fill="#18b521" stroke="#10521f" />
            <circle cx="5" cy="13" r="1.300" fill="#c6ffc6" />
          </svg>
        </span>
        <label className="relative flex items-center pb-px">
          <select
            aria-label="选择过滤器"
            className="h-5 w-[286px] appearance-none rounded-[3px] border border-[#6b8cbd] bg-white px-1 text-[12px] leading-4 text-[#29213a]"
          >
            <option>智能</option>
          </select>
          <svg className="pointer-events-none absolute right-1" width="6" height="4" viewBox="0 0 6 4" aria-hidden="true">
            <path d="M0 0h6L3 4z" fill="#29213a" />
          </svg>
        </label>
      </div>
    </section>
  );
}

function Folder({ x, y }: { x: number; y: number }) {
  return (
    <path d={`M${x} ${y + 9}v-7l1-1h3l1 1.500h6v6.500z`} fill="#ffef4a" stroke="#6b6b42" />
  );
}

function Tabs() {
  return (
    <div role="tablist" className="flex h-7 items-end pl-2">
      <button role="tab" aria-selected="true" aria-label="模型树" type="button" className="z-10 flex h-[25px] w-[46px] items-center justify-center rounded-tl bg-[#fffdf8] pr-1.5 pb-0.5 [clip-path:polygon(0_0,74%_0,100%_100%,0_100%)]">
        <svg width="14" height="20" viewBox="0 0 14 20" fill="#fffdf8" stroke="#39313f" aria-hidden="true">
          <path d="M2.500 5v11M3 9.500h6" />
          <path d="M.5 1.500h4v4h-4zM.5 7.500h4v4h-4zM.5 14.500h4v4h-4zM9.500 7.500h4v4h-4z" />
        </svg>
      </button>
      <button role="tab" aria-selected="false" aria-label="文件夹浏览器" type="button" className="-ml-1.5 flex h-[25px] w-12 items-center justify-center bg-linear-to-b from-[#adbdde] from-50% to-[#a5c6e7] to-50% pr-1.5 [clip-path:polygon(0_0,74%_0,100%_100%,20%_100%)]">
        <svg width="20" height="20" viewBox="0 0 20 20" aria-hidden="true">
          <Folder x={1.5} y={.5} />
          <Folder x={4.5} y={4.5} />
          <Folder x={7.5} y={8.5} />
        </svg>
      </button>
      <button role="tab" aria-selected="false" aria-label="收藏夹" type="button" className="-ml-1.5 flex h-[25px] w-12 items-center justify-center bg-linear-to-b from-[#adbdde] from-50% to-[#a5c6e7] to-50% pr-1.5 [clip-path:polygon(0_0,68%_0,100%_100%,20%_100%)]">
        <svg width="18" height="18" viewBox="0 0 18 18" aria-hidden="true">
          <path d="M1.500 15.500v-12l1-1h4l1 1.500h9v11.500z" fill="#ffef5a" stroke="#7b6b29" />
          <path d="M9 6v8M5 10h8M6.500 7.500l5 5M11.500 7.500l-5 5" stroke="#101894" />
        </svg>
      </button>
    </div>
  );
}

function PartIcon({ assembly }: { assembly?: boolean }) {
  return (
    <svg width="14" height="14" viewBox="0 0 14 14" strokeLinejoin="round" aria-hidden="true" className="shrink-0">
      {assembly ? (
        <>
          <path d="M.5 2.500l2-2h11v10l-3 3H.5z" fill={GOLD} stroke="#9c7318" />
          <path d="M5 3.500l2-2h6v7l-2 2H5z" fill="#a5cbf7" stroke="#84a5c6" />
          <path d="M12.500 2v8" stroke="#39636b" />
        </>
      ) : (
        <>
          <path d="M.5 4l2-2.500h11l-2 2.500z" fill="#eff7ff" stroke="#6b8cad" />
          <path d="M11.500 4l2-2.500v8l-2 3z" fill="#00847b" stroke="#39636b" />
          <path d="M.5 3.500h11v9H.5z" fill="#a5cbf7" stroke="#7ba5d6" />
        </>
      )}
    </svg>
  );
}

function ModelTree() {
  return (
    <div className="ml-[7px] flex-1 rounded-t-md border border-b-0 border-[#6b8cb5] bg-white pt-px pl-[5px] text-[12px] leading-5 text-[#39313f]">
      <div className="flex h-5 items-center gap-1">
        <PartIcon assembly />
        ASM0001.ASM
      </div>
      <ul>
        {["PRT0001.PRT", "PRT0001.PRT"].map((name, i) => (
          <li key={i} className="flex h-5 items-center pl-[7px]">
            <span className="h-full w-[13px]">
              <span className="block h-2.5 border-b border-l border-dotted border-[#7b7b84]" />
              {i === 0 && <span className="block h-2.5 border-l border-dotted border-[#7b7b84]" />}
            </span>
            <PartIcon />
            <span className="pl-1">{name}</span>
          </li>
        ))}
      </ul>
    </div>
  );
}

function Navigator() {
  return (
    <aside className="relative flex w-[258px] shrink-0 flex-col bg-[#fffbf0]">
      <div className="flex flex-1 flex-col bg-[linear-gradient(135deg,#bddabd_6%,#fffbf0_6%_19%,#bddabd_19%_56%,#fffbf0_56%_69%,#bddabd_69%)] bg-[length:4px_4px]">
        <Tabs />
        <div className="mr-[9px] flex flex-1 flex-col rounded-tr border-t border-r border-[#8c949c]">
          <div className="flex h-[30px] items-start justify-between">
            <h2 className="h-[29px] w-[115px] bg-[#fffdf8] pt-px pl-[25px] text-[12px] leading-7 font-bold text-[#39313f]">模型树</h2>
            <div className="flex h-7 items-center pr-[3px]">
              <button type="button" aria-label="设置" className="flex items-center gap-1 px-1.5">
                <svg width="20" height="20" viewBox="0 0 20 20" aria-hidden="true">
                  <path d="M1 5l4-2h6v4H8V6H4L1 7z" fill="#8c949c" stroke="#525a63" />
                  <path d="M6.500 6.500h3v12h-3z" fill="#d6945a" stroke="#943918" />
                  <path d="M11 2l2 3h3l1-4 2 2v4l-3 3v8h-3v-8l-3-3V3z" fill="#d6dee7" stroke="#637384" />
                  <path d="M13.500 12h2v6h-2z" fill="#2163ad" />
                </svg>
                <svg width="7" height="4" viewBox="0 0 7 4" aria-hidden="true">
                  <path d="M0 0h7L3.500 4z" fill="#101018" />
                </svg>
              </button>
              <button type="button" aria-label="显示" className="flex items-center gap-1 pr-1.5 pl-1">
                <svg width="18" height="19" viewBox="0 0 18 19" aria-hidden="true">
                  <path d="M1.500 .500h11l4 4v14h-15z" fill="#fff" stroke="#73849c" />
                  <path d="M12.500 .500v4h4" fill="#a5cbf7" stroke="#73849c" />
                  <circle cx="5" cy="5" r="1.200" stroke="#314a63" fill="none" />
                  <circle cx="5" cy="10" r="1.200" stroke="#314a63" fill="none" />
                  <circle cx="5" cy="15" r="1.200" stroke="#314a63" fill="none" />
                  <path d="M8 5.500h3M8 10.500h7M8 15.500h7" stroke="#738494" />
                </svg>
                <svg width="7" height="4" viewBox="0 0 7 4" aria-hidden="true">
                  <path d="M0 0h7L3.500 4z" fill="#101018" />
                </svg>
              </button>
            </div>
          </div>
          <div className="flex flex-1 flex-col pr-[7px]">
            <ModelTree />
          </div>
        </div>
      </div>
      <button type="button" aria-label="展开导航器" className="absolute top-[190px] right-0 flex h-[94px] w-[9px] items-center justify-center rounded-l-[3px] border border-r-0 border-[#adbdd6]">
        <span className="h-[3px] w-[3px] border border-[#314a52]" />
      </button>
      <button type="button" aria-label="收起导航器" className="absolute top-[293px] right-0 flex h-[92px] w-2 items-center justify-center rounded-l-[3px] border border-r-0 border-[#7b8c9c] bg-linear-to-r from-[#a5c6ef] from-70% to-[#bddabd] to-70%">
        <span className="h-[3px] w-[3px] border border-[#314a52]" />
      </button>
    </aside>
  );
}

function Viewport() {
  return (
    <main className="relative min-w-0 flex-1 overflow-hidden bg-[linear-gradient(180deg,#a5cbf0_0_38px,#adbdd7_38px_220px,#84a5c6_220px_365px,#7394bd_365px_450px,#738cad_450px_468px,#6384ad_468px)]">
      <svg className="absolute top-0 left-0" width="1039" height="559" viewBox="258 169 1039 559" fill="none" shapeRendering="crispEdges" aria-label="模型">
        <path d="M746 281L794 264L789 309Z" fill="#7b7b8c" />
        <path d="M590 337L735 286L725 364L722 373L623 411L582 410Z" fill="#7b7b8c" />
        <path d="M581 331L590 337L582 410L571 411Z" fill="#526b63" />
        <path d="M735 285L745 280L929 401L919 404Z" fill="#adbdd7" />
        <path d="M735 285L919 404L909 491L728 374L725 361Z" fill="#526b63" />
        <path d="M919 404L929 401L920 488L909 491Z" fill="#7b7b8c" />
        <g stroke="#848484">
          <path d="M673 390L774 456L766 539" />
          <path d="M590 337L673 390" strokeOpacity="0.500" />
          <path d="M572 388L729 331" strokeOpacity="0.500" />
          <path d="M572 388L766 514" />
          <path d="M571 416L762 543" />
          <path d="M729 331L779 314" />
          <path d="M727 360L776 343L970 469L785 535" />
          <path d="M740 366L787 349M929 410L974 440L790 507" />
          <path d="M735 365L758 380L920 488" />
        </g>
        <g stroke="#9ca5b5" strokeDasharray="2 1">
          <path d="M728 374L909 491L920 488" />
          <path d="M623 411L722 374" />
        </g>
        <path d="M581 331L590 337" stroke="#c6ced6" strokeDasharray="2 2" />
        <g stroke="#9c6331" strokeWidth="1.400">
          <path d="M580 331L787 257L777 344" />
          <path d="M735 285L745 280L929 401" />
        </g>
        <g stroke="#9c6331">
          <path d="M735 285L726 362M745 281L737 361M742 284L735 361" />
          <path d="M920 488L740 370M573 415L606 405" />
        </g>
        <path d="M777 345L606 406" stroke="#9c6331" strokeWidth="2" />
        <path d="M580 331L570 414M929 402L920 488" stroke="#9c6331" strokeDasharray="5 2" strokeWidth="1.500" />
        <path d="M728 359H767V371H754V374H723V362H728Z" fill="#adbdd7" />
        <g fill="#9c6331" className="font-[Liberation_Mono,monospace] text-[10px]" shapeRendering="auto">
          <text x="788" y="256">TOP_TOP</text>
          <text x="930" y="400">TOP</text>
          <text x="754" y="368">HT</text>
          <text x="724" y="370">FRONT</text>
          <text x="570" y="416">RIGHT</text>
          <text x="600" y="417">IGHT</text>
          <text x="580" y="425">FRONT</text>
          <text x="767" y="515">ADTM1</text>
          <text x="764" y="544">ASM_FRONT</text>
        </g>
        <g shapeRendering="auto">
          <path d="M774 401L787 396" stroke="#f73131" strokeWidth="1.500" />
          <path d="M774 401L786 408" stroke="#31f731" strokeWidth="1.500" />
          <path d="M774 401V414" stroke="#08f7f7" strokeWidth="1.500" />
          <circle cx="787" cy="396" r="2.300" fill="#f73131" />
          <circle cx="786" cy="408" r="3.200" fill="#31f731" />
          <circle cx="773" cy="414" r="3" fill="#08f7f7" />
        </g>
      </svg>
    </main>
  );
}

function FeatureToolbar() {
  return (
    <aside className="relative flex w-[67px] shrink-0 gap-0.5 overflow-hidden">
      <div className="flex w-10 shrink-0 flex-col items-start">
        <RowGrip />
        <ToolButton tool="sketch" label="草绘" />
        <ToolButton tool="plane" label="平面" />
        <ToolButton tool="axis" label="轴" />
        <ToolButton tool="curve" label="曲线" />
        <div className="flex">
          <ToolButton tool="points" label="点" />
          <button type="button" aria-label="点工具" className="flex h-7 w-3 items-center justify-center">
            <svg width="4" height="6" viewBox="0 0 4 6" aria-hidden="true">
              <path d="M0 0v6L4 3z" fill="#29213a" />
            </svg>
          </button>
        </div>
        <ToolButton tool="csys" label="坐标系" />
        <ToolButton tool="analysis" label="分析" />
        <RowGrip />
        <ToolButton tool="annotation" label="注释" />
        <ToolButton tool="annotationFeature" label="注释特征" />
        <ToolButton tool="annotationGroup" label="注释传播" />
        <RowGrip />
        <ToolButton tool="assemble" label="装配" />
        <ToolButton tool="manikin" label="人体模型" />
        <ToolButton tool="createPart" label="创建" pressed="hover" />
        <ToolButton tool="hole" label="孔" />
        <ToolButton tool="shell" label="壳" />
        <ToolButton tool="round" label="倒圆角" />
        <ToolButton tool="chamfer" label="倒角" />
      </div>
      <div className="flex w-[26px] shrink-0 flex-col items-center">
        <RowGrip />
        <ToolButton tool="extrude" label="拉伸" />
        <ToolButton tool="revolve" label="旋转" />
        <ToolButton tool="sweep" label="可变截面扫描" />
        <ToolButton tool="boundary" label="边界混合" />
        <ToolButton tool="style" label="造型" />
        <RowGrip />
        <ToolButton tool="mirror" label="镜像" />
        <ToolButton tool="merge" label="合并" />
        <ToolButton tool="trim" label="修剪" />
        <ToolButton tool="pattern" label="阵列" />
      </div>
      <svg className="pointer-events-none absolute top-[363px] left-1.5" width="14" height="22" viewBox="0 0 14 22" aria-hidden="true">
        <path d="M1.500 1.500v16l3.500-3.500 3 7 3-1.500-3-6.500h5z" fill="#fff" stroke="#18181f" />
      </svg>
    </aside>
  );
}

export default function App() {
  return (
    <div className="flex h-screen flex-col overflow-hidden bg-[#fffbf0] font-['Noto_Sans','Noto_Sans_CJK_SC',sans-serif] text-[#39313f]">
      <TitleBar />
      <nav className="flex h-[30px] shrink-0 items-center gap-px pt-1.5">
        {menus.map((m) => (
          <button key={m} type="button" className="px-[7px] text-[12px] leading-4 whitespace-nowrap hover:bg-[#d6e7f7]">
            {m}
          </button>
        ))}
      </nav>
      <MainToolbar />
      <MessageArea />
      <div className="flex min-h-0 flex-1">
        <Navigator />
        <Viewport />
        <FeatureToolbar />
      </div>
    </div>
  );
}
